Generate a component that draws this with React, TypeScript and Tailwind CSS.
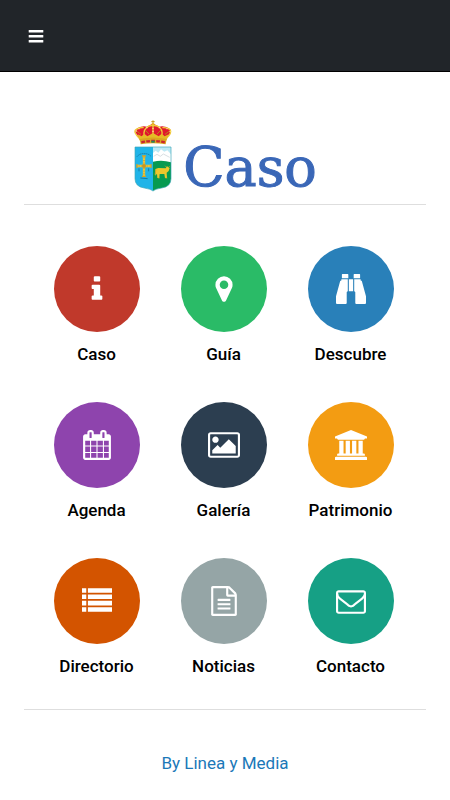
import type { ReactNode } from "react";

interface MenuItem {
    label: string;
    href: string;
    color: string;
    icon: ReactNode;
}

// All the menu icons share the same 1792 units tall grid
function Icon({ d, wide }: { d: string; wide?: boolean }) {
    return (
        <svg
            aria-hidden="true"
            viewBox={wide ? "0 0 1920 1792" : "0 0 1792 1792"}
            className={wide ? "w-8 h-[30px]" : "w-[30px] h-[30px]"}
            fill="currentColor"
        >
            <path d={d} />
        </svg>
    );
}

const items: MenuItem[] = [
    {
        label: "Caso",
        href: "#caso",
        color: "bg-[#c0392b]",
        icon: <Icon d="M1216 1344v128q0 26-19 45t-45 19h-512q-26 0-45-19t-19-45v-128q0-26 19-45t45-19h64v-384h-64q-26 0-45-19t-19-45v-128q0-26 19-45t45-19h384q26 0 45 19t19 45v576h64q26 0 45 19t19 45zm-128-1152v192q0 26-19 45t-45 19h-256q-26 0-45-19t-19-45v-192q0-26 19-45t45-19h256q26 0 45 19t19 45z" />,
    },
    {
        label: "Guía",
        href: "#guia",
        color: "bg-[#2abb67]",
        icon: <Icon d="M1152 640q0-106-75-181t-181-75-181 75-75 181 75 181 181 75 181-75 75-181zm256 0q0 109-33 179l-364 774q-16 33-47.5 52t-67.5 19-67.5-19-46.5-52l-365-774q-33-70-33-179 0-212 150-362t362-150 362 150 150 362z" />,
    },
    {
        label: "Descubre",
        href: "#descubre",
        color: "bg-[#2980b9]",
        icon: <Icon d="M384 0h320q32 0 32 32v224h-384v-224q0-32 32-32zM1088 0h320q32 0 32 32v224h-384v-224q0-32 32-32zM320 320h384v704q-64 16-64 64v640q0 64-64 64h-512q-64 0-64-64v-384q0-18 5-36l245-884q12-40 70-40zM1472 320h-384v704q64 16 64 64v640q0 64 64 64h512q64 0 64-64v-384q0-18-5-36l-245-884q-12-40-70-40zM768 320h256v704h-256z" />,
    },
    {
        label: "Agenda",
        href: "#agenda",
        color: "bg-[#8e44ad]",
        icon: <Icon d="M192 1664h288v-288h-288v288zm352 0h320v-288h-320v288zm-352-352h288v-320h-288v320zm352 0h320v-320h-320v320zm-352-384h288v-288h-288v288zm736 736h320v-288h-320v288zm-384-736h320v-288h-320v288zm768 736h288v-288h-288v288zm-384-352h320v-320h-320v320zm-352-864v-288q0-13-9.500-22.500t-22.500-9.500h-64q-13 0-22.500 9.500t-9.500 22.500v288q0 13 9.500 22.500t22.500 9.500h64q13 0 22.500-9.500t9.500-22.500zm736 864h288v-320h-288v320zm-384-384h320v-288h-320v288zm384 0h288v-288h-288v288zm32-480v-288q0-13-9.500-22.500t-22.500-9.500h-64q-13 0-22.500 9.500t-9.500 22.500v288q0 13 9.500 22.500t22.500 9.500h64q13 0 22.500-9.500t9.500-22.500zm384-64v1280q0 52-38 90t-90 38h-1408q-52 0-90-38t-38-90v-1280q0-52 38-90t90-38h128v-96q0-66 47-113t113-47h64q66 0 113 47t47 113v96h384v-96q0-66 47-113t113-47h64q66 0 113 47t47 113v96h128q52 0 90 38t38 90z" />,
    },
    {
        label: "Galería",
        href: "#galeria",
        color: "bg-[#2c3e50]",
        icon: <Icon wide d="M640 576q0 80-56 136t-136 56-136-56-56-136 56-136 136-56 136 56 56 136zm1024 384v448h-1408v-192l320-320 160 160 512-512zm96-704h-1600q-13 0-22.500 9.500t-9.500 22.500v1216q0 13 9.500 22.500t22.500 9.500h1600q13 0 22.500-9.500t9.500-22.500v-1216q0-13-9.500-22.500t-22.500-9.500zm160 32v1216q0 66-47 113t-113 47h-1600q-66 0-113-47t-47-113v-1216q0-66 47-113t113-47h1600q66 0 113 47t47 113z" />,
    },
    {
        label: "Patrimonio",
        href: "#patrimonio",
        color: "bg-[#f39c12]",
        icon: <Icon wide d="M960 0l960 384v128h-128q0 26-20.500 45t-48.500 19h-1526q-28 0-48.500-19t-20.500-45h-128v-128zm-704 640h256v768h128v-768h256v768h128v-768h256v768h128v-768h256v768h59q28 0 48.500 19t20.500 45v64h-1664v-64q0-26 20.500-45t48.500-19h59v-768zm1595 960q28 0 48.500 19t20.500 45v128h-1920v-128q0-26 20.500-45t48.500-19h1782z" />,
    },
    {
        label: "Directorio",
        href: "#directorio",
        color: "bg-[#d35400]",
        icon: <Icon d="M0 128h256v272h-256zM352 128h1440v272h-1440zM0 507h256v272h-256zM352 507h1440v272h-1440zM0 886h256v272h-256zM352 886h1440v272h-1440zM0 1265h256v272h-256zM352 1265h1440v272h-1440z" />,
    },
    {
        label: "Noticias",
        href: "#noticias",
        color: "bg-[#95a5a6]",
        icon: <Icon d="M1596 380q28 28 48 76t20 88v1152q0 40-28 68t-68 28h-1344q-40 0-68-28t-28-68v-1600q0-40 28-68t68-28h896q40 0 88 20t76 48zm-444-244v376h376q-10-29-22-41l-313-313q-12-12-41-22zm384 1528v-1024h-416q-40 0-68-28t-28-68v-416h-768v1536h1280zm-1024-864q0-14 9-23t23-9h704q14 0 23 9t9 23v64q0 14-9 23t-23 9h-704q-14 0-23-9t-9-23v-64zm736 224q14 0 23 9t9 23v64q0 14-9 23t-23 9h-704q-14 0-23-9t-9-23v-64q0-14 9-23t23-9h704zm0 256q14 0 23 9t9 23v64q0 14-9 23t-23 9h-704q-14 0-23-9t-9-23v-64q0-14 9-23t23-9h704z" />,
    },
    {
        label: "Contacto",
        href: "#contacto",
        color: "bg-[#16a085]",
        icon: <Icon d="M1664 1504v-768q-32 36-69 66-268 206-426 338-51 43-83 67t-86.500 48.500-102.500 24.500h-2q-48 0-102.500-24.500t-86.500-48.500-83-67q-158-132-426-338-37-30-69-66v768q0 13 9.500 22.500t22.500 9.500h1472q13 0 22.500-9.500t9.500-22.500zm0-1051v-24.500l-.5-13-3-12.500-5.500-9-9-7.500-14-2.500h-1472q-13 0-22.500 9.500t-9.500 22.500q0 168 147 284 193 152 401 317 6 5 35 29.500t46 37.500 44.500 31.500 50.500 27.500 43 9h2q20 0 43-9t50.500-27.500 44.500-31.500 46-37.500 35-29.500q208-165 401-317 54-43 100.500-115.500t46.500-131.500zm128-37v1088q0 66-47 113t-113 47h-1472q-66 0-113-47t-47-113v-1088q0-66 47-113t113-47h1472q66 0 113 47t47 113z" />,
    },
];

function Crest() {
    return (
        <svg aria-hidden="true" viewBox="0 0 120 216" className="w-10 h-[72px] shrink-0">
            {/* crown */}
            <path d="M12 44Q2 34 10 27Q24 16 42 20L60 10L78 20Q98 16 111 28Q118 36 107 46L98 62H22Z" fill="#e0182d" />
            <path d="M60 1V12M55 5H65" stroke="#c79a1b" strokeWidth="3" />
            <circle cx="60" cy="14" r="5" fill="#e9b820" />
            <path d="M20 56Q-1 36 9 29Q20 21 32 23M38 56Q27 36 40 23Q50 15 60 17Q70 15 81 23Q93 36 82 56M88 23Q105 21 112 30Q117 38 100 56M60 18V56" fill="none" stroke="#f0c93a" strokeWidth="4" />
            <path d="M12 34L24 43M36 30L48 42M84 30L72 42M108 34L96 43" stroke="#bd8118" strokeWidth="3" />
            <g fill="#fff3b0">
                <circle cx="10" cy="33" r="2" />
                <circle cx="18" cy="26" r="2" />
                <circle cx="42" cy="23" r="2" />
                <circle cx="60" cy="25" r="2" />
                <circle cx="60" cy="34" r="2" />
                <circle cx="79" cy="23" r="2" />
                <circle cx="102" cy="26" r="2" />
                <circle cx="111" cy="34" r="2" />
            </g>
            <path d="M14 43L26 49L34 41L43 49L60 39L77 49L86 41L95 49L107 43L99 64H21Z" fill="#e6bb26" />
            <path d="M20 57Q60 48 101 57L98 73Q60 67 23 73Z" fill="#dba620" />
            <path d="M25 67Q60 59 96 67" fill="none" stroke="#cc2430" strokeWidth="7" strokeDasharray="11 4" />
            <path d="M55 62h10v6h-10z" fill="#228c58" />

            {/* shield */}
            <path d="M6 81H60V213Q54 207 34 204Q6 200 6 176Z" fill="#20b4e8" />
            <path d="M60 81H114V126H60Z" fill="#bde9f5" />
            <path d="M60 99L68 92L76 98L84 88L94 95L103 91L114 103V129H60Z" fill="#fff" />
            <path d="M62 109L72 103L82 109L91 102L110 112" fill="none" stroke="#d9dfe3" strokeWidth="3" />
            <path d="M60 125Q88 118 114 127V176Q114 200 86 204Q66 207 60 213Z" fill="#079a50" />
            <path d="M6 81H114V176Q114 200 86 204Q66 207 60 213Q54 207 34 204Q6 200 6 176Z" fill="none" stroke="#3ca7b8" strokeWidth="2" />

            {/* cross */}
            <path d="M33 108V169M13 138H54" stroke="#eac63b" strokeWidth="7" />
            <path d="M27 108H39M27 169H39M12 132V144M54 132V144" stroke="#d4a326" strokeWidth="4" />
            <path d="M33 112V165M17 138H50" stroke="#977d34" strokeWidth="2" strokeDasharray="3 5" />
            <circle cx="33" cy="138" r="6" fill="#c39726" />
            <path d="M12 110Q20 100 33 101Q46 100 54 109" fill="none" stroke="#167ba5" strokeWidth="3" strokeDasharray="4 2" />
            <path d="M18 145V154M47 145V154M22 174L44 176" stroke="#167ba5" strokeWidth="3" />

            {/* cow */}
            <path d="M67 147L76 144L98 145L102 139L110 144L107 153L101 158L102 174H96L94 162L80 162L79 174H73L72 161L67 167Z" fill="#edc72c" />
            <path d="M69 149L66 164M75 174H80M97 174H103M100 141L96 137M107 142L110 138" stroke="#d5a91f" strokeWidth="2" />
        </svg>
    );
}

export default function App() {
    return (
        <div className="min-h-screen bg-white font-['Roboto',sans-serif]">
            <header className="h-[72px] px-6 flex items-center bg-[#212529] border-b border-black">
                <button type="button" aria-label="Menú" className="p-1 text-white">
                    <svg aria-hidden="true" viewBox="0 0 16 16" className="w-4 h-4" fill="currentColor">
                        <rect x="0.7" y="2" width="14.6" height="2.6" rx="0.5" />
                        <rect x="0.7" y="7" width="14.6" height="2.6" rx="0.5" />
                        <rect x="0.7" y="12" width="14.6" height="2.6" rx="0.5" />
                    </svg>
                </button>
            </header>

            <main className="px-6 pt-12">
                <h1 className="h-[85px] pb-3 flex items-end justify-center gap-2.5 border-b border-[#dedede] text-[#3a67b7]">
                    <Crest />
                    <span className="text-[54px] leading-[48px] font-['DejaVu_Serif',serif] [-webkit-text-stroke:1px_#3a67b7]">Caso</span>
                </h1>

                <nav className="pt-[41px] pb-[31px] pl-[9px] pr-3 grid grid-cols-3 gap-y-9 border-b border-[#dedede]">
                    {items.map((item) => (
                        <a key={item.label} href={item.href} className="flex flex-col items-center gap-2.5 text-black">
                            <span className={`w-[86px] h-[86px] rounded-full flex items-center justify-center text-white ${item.color}`}>
                                {item.icon}
                            </span>
                            <span className="text-[17px] leading-6 font-medium">{item.label}</span>
                        </a>
                    ))}
                </nav>
            </main>

            <footer className="pt-[41px] pb-5 text-center">
                <a href="#autor" className="text-[17px] leading-6 text-[#1b78b8]">By Linea y Media</a>
            </footer>
        </div>
    );
}
